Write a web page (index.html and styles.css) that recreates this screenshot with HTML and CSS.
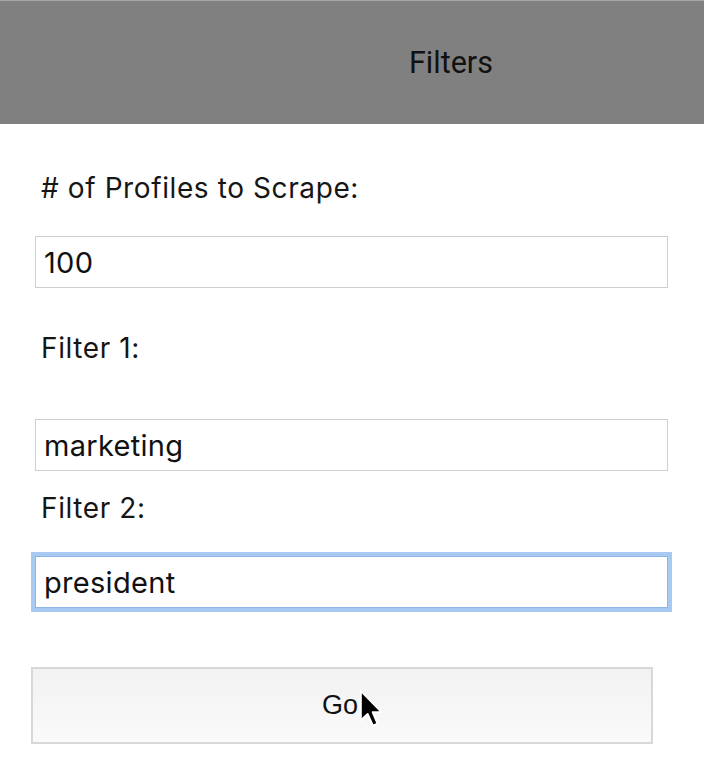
FILE: index.html
```html
<!DOCTYPE html>
<html>
<head>
<meta charset="utf-8">
<link rel="stylesheet" href="styles.css">
</head>
<body>
<header class="topbar"><span class="title">Filters</span></header>
<main class="form">
  <label class="label label-first">#&nbsp;of Profiles to Scrape:</label>
  <div class="field field-first"><input class="input" type="text" value="100"></div>
  <label class="label label-f1">Filter 1:</label>
  <div class="field field-f1"><input class="input" type="text" value="marketing"></div>
  <label class="label label-f2">Filter 2:</label>
  <div class="field field-focus"><input class="input input-focus" type="text" value="president"></div>
  <div class="btn-wrap">
    <button class="go">Go</button>
    <svg class="cursor" width="26" height="41" viewBox="0 0 14 22">
      <path d="M1.5 1.5 L1.5 17.5 L5.2 14 L8 20.3 L10.6 19.2 L7.9 13 L12.8 13 Z" fill="#000" stroke="#fff" stroke-width="1.1" stroke-linejoin="round"/>
    </svg>
  </div>
</main>
</body>
</html>
```

FILE: styles.css
```css
html, body {
  margin: 0;
  padding: 0;
  background: #ffffff;
}
body {
  width: 704px;
  height: 767px;
  overflow: hidden;
  font-family: "Inter", "Liberation Sans", sans-serif;
  color: #111;
}
.topbar {
  height: 123px;
  border-top: 1px solid #a6a6a6;
  background: #808080;
  display: flex;
  align-items: center;
  padding-left: 409px;
}
.title {
  font-family: "Roboto", "Liberation Sans", sans-serif;
  font-size: 30.5px;
  color: #111;
}
.form {
  display: flex;
  flex-direction: column;
  padding: 0 36px 0 35px;
}
.label {
  font-size: 28px;
  line-height: 32px;
  letter-spacing: 0.6px;
  padding-left: 6px;
  color: #161616;
}
.label-first { margin-top: 48px; }
.field-first { margin-top: 32px; }
.input {
  display: block;
  width: 100%;
  box-sizing: border-box;
  height: 52px;
  border: 1px solid #cfcfcf;
  outline: none;
  padding: 0 7px 0 8px;
  font-family: "Inter", "Liberation Sans", sans-serif;
  font-size: 29px;
  letter-spacing: 0.3px;
  color: #111;
  background: #fff;
}
.label-f1 { margin-top: 44px; }
.field-f1 { margin-top: 55px; }
.label-f2 { margin-top: 21px; }
.field-focus { margin-top: 32px; }
.input-focus {
  box-shadow: 0 0 0 4px #a8c9f1;
  border-color: #8db5e8;
}
.btn-wrap {
  position: relative;
  margin-top: 59px;
  margin-left: -4px;
  margin-right: 15px;
}
.go {
  display: block;
  width: 100%;
  height: 77px;
  border: 2px solid #d8d8d8;
  background: linear-gradient(#f2f2f2, #fafafa);
  font-family: "Liberation Sans", sans-serif;
  font-size: 27px;
  color: #111;
  padding: 0 4px 0 0;
}
.cursor {
  position: absolute;
  left: 327px;
  top: 21px;
}
```
